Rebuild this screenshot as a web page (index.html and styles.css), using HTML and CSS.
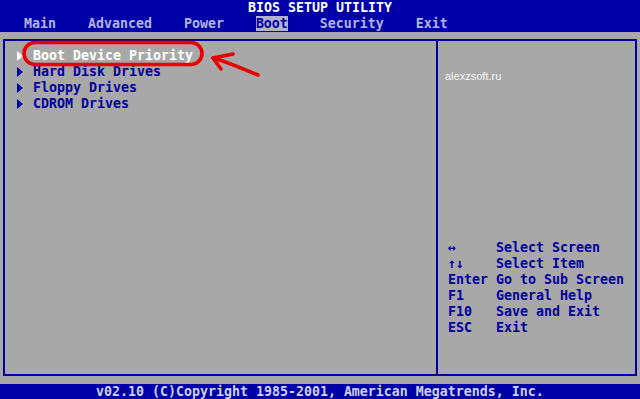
FILE: index.html
```html
<!DOCTYPE html>
<html lang="en">

<head>
    <meta charset="UTF-8">
    <meta name="viewport" content="width=device-width, initial-scale=1.0">
    <title>BIOS Setup Utility</title>
    <link rel="stylesheet" href="styles.css">
</head>

<body>
    <div class="screen">
        <div class="top-bar">
            <div class="title">BIOS SETUP UTILITY</div>
            <div class="tabs">   Main    Advanced    Power    <span class="tab-active">Boot</span>    Security    Exit</div>
        </div>

        <div class="workspace">
            <div class="frame">
                <div class="menu-pane">
                    <ul class="items">
                        <li class="item active">Boot Device Priority</li>
                        <li class="item">Hard Disk Drives</li>
                        <li class="item">Floppy Drives</li>
                        <li class="item">CDROM Drives</li>
                    </ul>
                </div>
                <div class="help-pane">
                    <div class="watermark">alexzsoft.ru</div>
                    <div class="keys">
                        <span class="key">↔</span><span>Select Screen</span>
                        <span class="key">↑↓</span><span>Select Item</span>
                        <span class="key">Enter</span><span>Go to Sub Screen</span>
                        <span class="key">F1</span><span>General Help</span>
                        <span class="key">F10</span><span>Save and Exit</span>
                        <span class="key">ESC</span><span>Exit</span>
                    </div>
                </div>
            </div>
        </div>

        <div class="bottom-bar">v02.10 (C)Copyright 1985-2001, American Megatrends, Inc.</div>

        <!-- red hand-drawn markup on top of the screenshot -->
        <svg class="markup" width="640" height="399" viewBox="0 0 640 399">
            <rect x="24" y="42.5" width="178" height="22" rx="11" ry="11" fill="none" stroke="#e80000" stroke-width="3.5" />
            <path d="M258 75 C245 70 228 62 213 58" fill="none" stroke="#e80000" stroke-width="3.5" stroke-linecap="round" />
            <path d="M233 54 L213 58 L221 69" fill="none" stroke="#e80000" stroke-width="3.5" stroke-linecap="round" stroke-linejoin="round" />
        </svg>
    </div>
</body>

</html>
```

FILE: styles.css
```css
html,
body {
    margin: 0;
    padding: 0;
    background-color: #a8a8a8;
}

.screen {
    position: relative;
    width: 640px;
    height: 399px;
    overflow: hidden;
    font-family: "DejaVu Sans Mono", "Liberation Mono", monospace;
    font-weight: bold;
    font-size: 13.29px;
    line-height: 16px;
    background-color: #a8a8a8;
}

.top-bar {
    background-color: #0000a8;
    height: 32px;
}

.title {
    color: #ffffff;
    text-align: center;
    height: 16px;
}

.tabs {
    color: #b4b4e4;
    white-space: pre;
    height: 16px;
}

.tab-active {
    background-color: #b0b0d0;
    color: #0000a8;
}

.workspace {
    height: 352px;
    padding: 7px 3px 8px 3px;
    box-sizing: border-box;
}

.frame {
    display: flex;
    height: 100%;
    border: 2px solid #0000a0;
    box-sizing: border-box;
}

.menu-pane {
    width: 431px;
    padding: 7px 0 0 11px;
    box-sizing: border-box;
}

.items {
    list-style: none;
    margin: 0;
    padding: 0;
}

.item {
    display: flex;
    align-items: center;
    height: 16px;
    color: #0000a0;
    white-space: pre;
}

.item::before {
    content: "";
    width: 0;
    height: 0;
    margin: 0 10px 0 1px;
    border-top: 5px solid transparent;
    border-bottom: 5px solid transparent;
    border-left: 6px solid #0000a0;
}

.item.active {
    color: #ffffff;
}

.item.active::before {
    border-left-color: #ffffff;
}

.help-pane {
    flex: 1;
    border-left: 2px solid #0000a0;
    padding: 0 0 0 10px;
}

.watermark {
    margin-top: 29px;
    margin-left: -3px;
    font-family: "Liberation Sans", Arial, sans-serif;
    font-weight: normal;
    font-size: 11px;
    line-height: 12px;
    color: #f4f4f4;
}

.keys {
    display: grid;
    grid-template-columns: 48px 1fr;
    margin-top: 158px;
    color: #0000a0;
    white-space: pre;
}

.bottom-bar {
    background-color: #0000a8;
    color: #d0d0f0;
    height: 16px;
    padding-left: 96px;
    white-space: pre;
}

.markup {
    position: absolute;
    top: 0;
    left: 0;
    pointer-events: none;
}
```
